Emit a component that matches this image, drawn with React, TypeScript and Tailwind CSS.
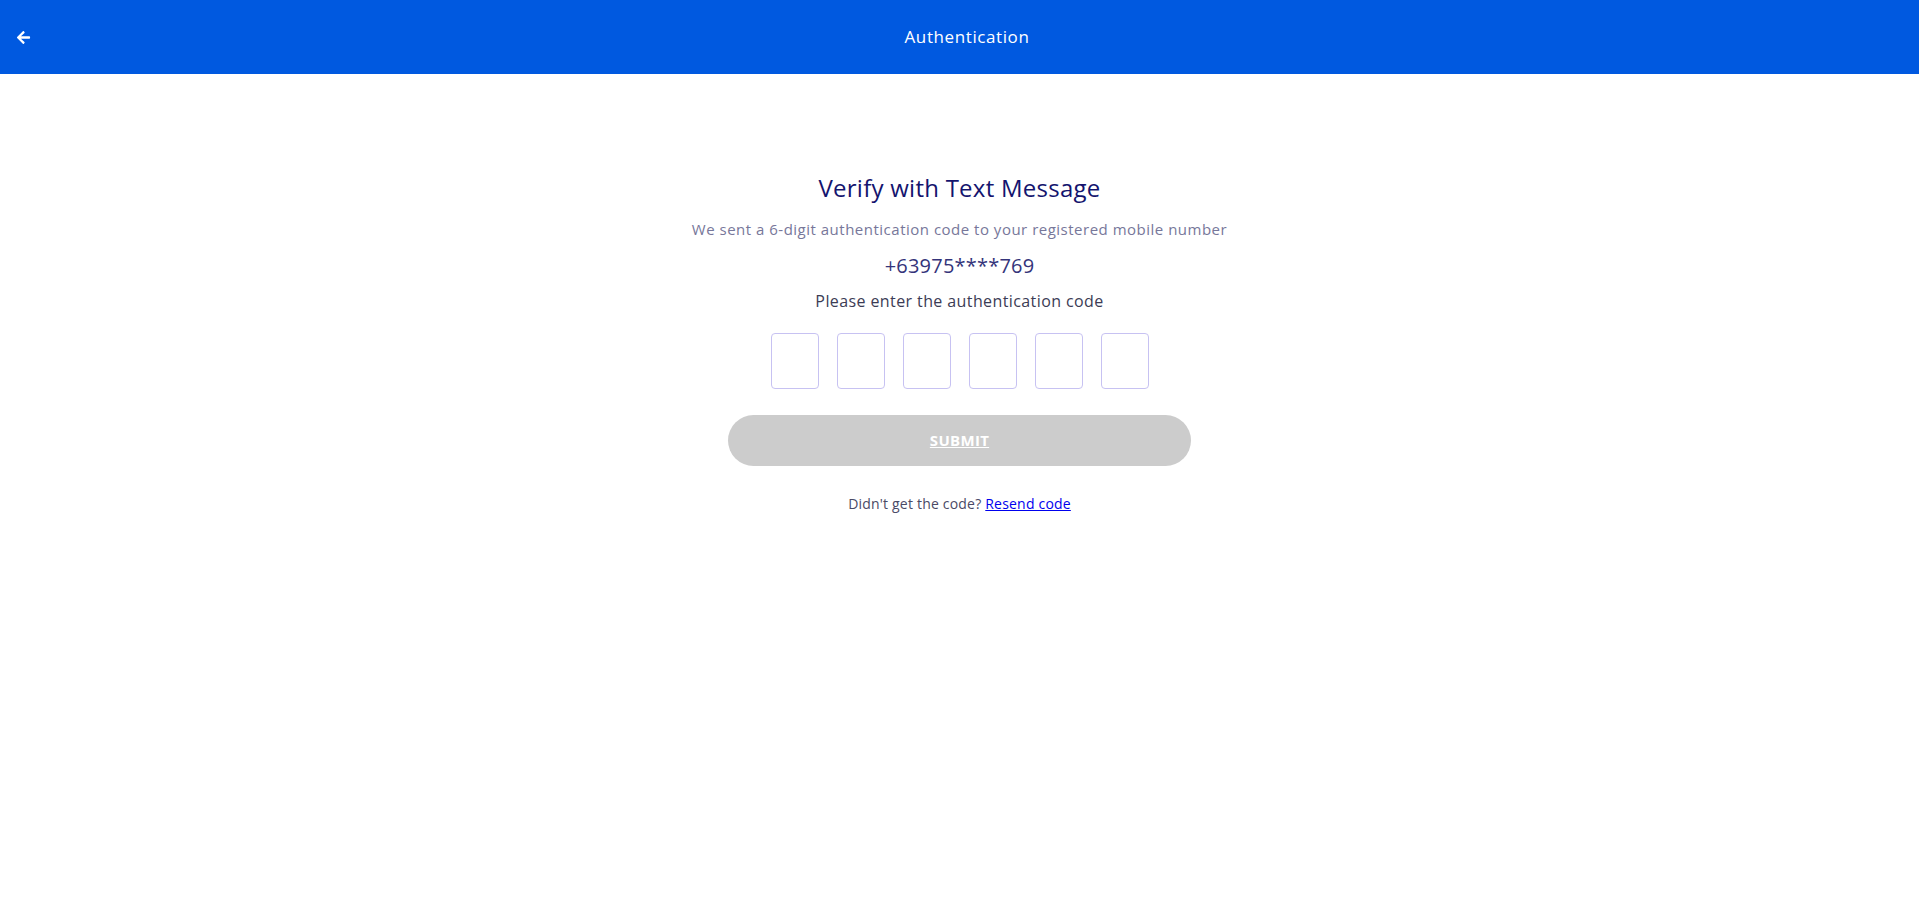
import { FaArrowLeft } from "react-icons/fa";

export default function App() {
  return (
    <div className="min-h-screen bg-white font-['Open_Sans',sans-serif]">
      {/* Header */}
      <header className="flex h-[74px] items-center bg-[#0059e0] pl-4 pr-4 text-white">
        <button className="flex h-6 w-[15px] items-center">
          <FaArrowLeft size={15} />
        </button>
        <div className="flex-1 text-center text-[17px] tracking-[0.6px]">Authentication</div>
      </header>

      {/* Body */}
      <main className="flex flex-col items-center pt-[98px]">
        <h1 className="text-[24px] leading-8 tracking-[0.25px] text-[#14146e]">
          Verify with Text Message
        </h1>
        <p className="mt-[15px] text-[15px] leading-5 tracking-[0.5px] text-[#77779a]">
          We sent a 6-digit authentication code to your registered mobile number
        </p>
        <div className="mt-[13px] text-[20px] leading-7 tracking-[0.2px] text-[#34347a]">
          +63975****769
        </div>
        <div className="mt-[11px] text-[16px] font-medium leading-5 tracking-[0.4px] text-[#3c3c55]">
          Please enter the authentication code
        </div>

        <div className="mt-[22px] flex gap-[18px]">
          {[0, 1, 2, 3, 4, 5].map((i) => (
            <input
              key={i}
              maxLength={1}
              className="h-[56px] w-[48px] rounded-[4px] border border-[#c7c2f2] text-center text-lg outline-none"
            />
          ))}
        </div>

        <button
          disabled
          className="mt-[26px] flex h-[51px] w-[463px] items-center justify-center rounded-full bg-[#cccccc] text-[15px] font-bold tracking-[0.3px] text-white underline"
        >
          SUBMIT
        </button>

        <p className="mt-[27px] text-[14px] tracking-[0.2px] text-[#4a4a66]">
          Didn't get the code?{" "}
          <a href="#" className="font-medium text-[#0000ee] underline">
            Resend code
          </a>
        </p>
      </main>
    </div>
  );
}
